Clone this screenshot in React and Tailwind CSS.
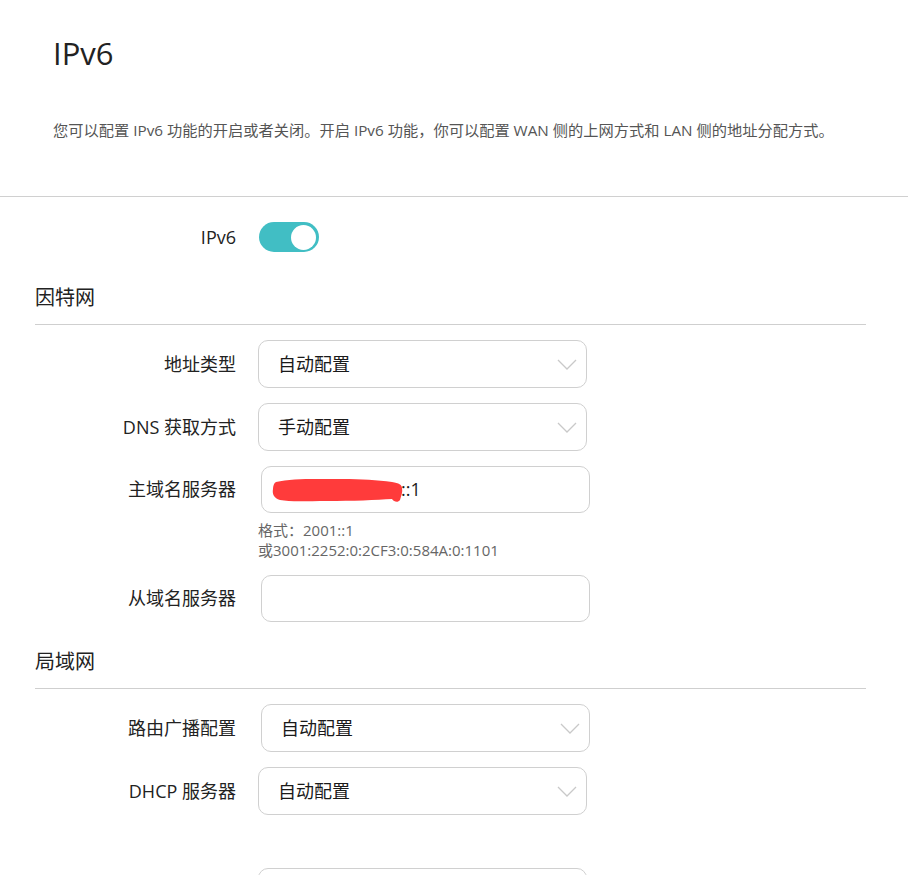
import { useState } from "react";

const Chevron = () => (
  <svg width="20" height="11" viewBox="0 0 20 11" fill="none" className="shrink-0">
    <path d="M1 1l9 9 9-9" stroke="#c9c9c9" strokeWidth="1.3" />
  </svg>
);

const Scribble = () => (
  <svg width="132" height="27" viewBox="0 0 132 27" className="shrink-0">
    <path
      d="M4 6 C20 2 45 3 70 3 C90 3 105 4 120 6 C127 7 130 9 130 12 C131 16 129 20 128 24 C126 27 122 26 120 23 C105 24 80 25 55 25 C35 25 18 26 8 24 C2 22 0 18 1 13 C1 10 2 7 4 6 Z"
      fill="#ff3b3b"
    />
  </svg>
);

const Label = ({ children }) => (
  <div className="w-[236px] shrink-0 text-right text-[18px] text-[#222]">{children}</div>
);

const Select = ({ value, className = "" }) => (
  <div
    className={`flex h-[48px] w-[329px] items-center justify-between rounded-[10px] border border-[#d0d0d0] pl-[19px] pr-[9px] text-[18px] text-[#1a1a1a] ${className}`}
  >
    <span>{value}</span>
    <Chevron />
  </div>
);

const Row = ({ label, children, className = "" }) => (
  <div className={`flex items-center gap-[22px] ${className}`}>
    <Label>{label}</Label>
    {children}
  </div>
);

const Section = ({ title, className = "" }) => (
  <div className={`ml-[35px] mr-[42px] border-b border-[#cfcfcf] pb-[12px] text-[20px] leading-[28px] text-[#222] ${className}`}>
    {title}
  </div>
);

export default function App() {
  const [on, setOn] = useState(true);

  return (
    <div
      className="h-[875px] overflow-hidden bg-white"
      style={{ fontFamily: '"Open Sans", "Noto Sans CJK SC", sans-serif' }}
    >
      {/* Header */}
      <div className="px-[53px] pt-[33px] pb-[55px]">
        <h1 className="text-[31px] leading-[40px] text-[#222]">IPv6</h1>
        <p className="mt-[46px] whitespace-nowrap text-[15.25px] leading-[22px] text-[#555]">
          您可以配置 IPv6 功能的开启或者关闭。开启 IPv6 功能，你可以配置 WAN 侧的上网方式和 LAN 侧的地址分配方式。
        </p>
      </div>

      <div className="border-t border-[#d0d0d0]" />

      {/* Toggle */}
      <Row label="IPv6" className="mt-[25px] gap-[23px]">
        <button
          onClick={() => setOn(!on)}
          className={`flex h-[30px] w-[60px] items-center rounded-full px-[3px] ${
            on ? "justify-end bg-[#41bec4]" : "justify-start bg-[#ccc]"
          }`}
        >
          <span className="h-[25px] w-[25px] rounded-full bg-white" />
        </button>
      </Row>

      <Section title="因特网" className="mt-[32px]" />

      <div className="mt-[15px] flex flex-col gap-[15px]">
        <Row label="地址类型">
          <Select value="自动配置" />
        </Row>
        <Row label="DNS 获取方式">
          <Select value="手动配置" />
        </Row>
        <div>
          <Row label="主域名服务器">
            <div className="ml-[3px] flex h-[47px] w-[329px] items-center rounded-[10px] border border-[#d0d0d0] pl-[10px] text-[18px] text-[#1a1a1a]">
              <Scribble />
              <span className="-ml-[3px]">::1</span>
            </div>
          </Row>
          <div className="mt-[7px] pl-[258px] text-[15px] leading-[20px] text-[#666]">
            <div>格式：2001::1</div>
            <div>或3001:2252:0:2CF3:0:584A:0:1101</div>
          </div>
        </div>
        <Row label="从域名服务器">
          <div className="ml-[3px] h-[47px] w-[329px] rounded-[10px] border border-[#d0d0d0]" />
        </Row>
      </div>

      <Section title="局域网" className="mt-[26px]" />

      <div className="mt-[15px] flex flex-col gap-[15px]">
        <Row label="路由广播配置">
          <Select value="自动配置" className="ml-[3px]" />
        </Row>
        <Row label="DHCP 服务器">
          <Select value="自动配置" />
        </Row>
        <Row label="" className="mt-[38px]">
          <div className="h-[48px] w-[329px] rounded-[10px] border border-[#d0d0d0]" />
        </Row>
      </div>
    </div>
  );
}
